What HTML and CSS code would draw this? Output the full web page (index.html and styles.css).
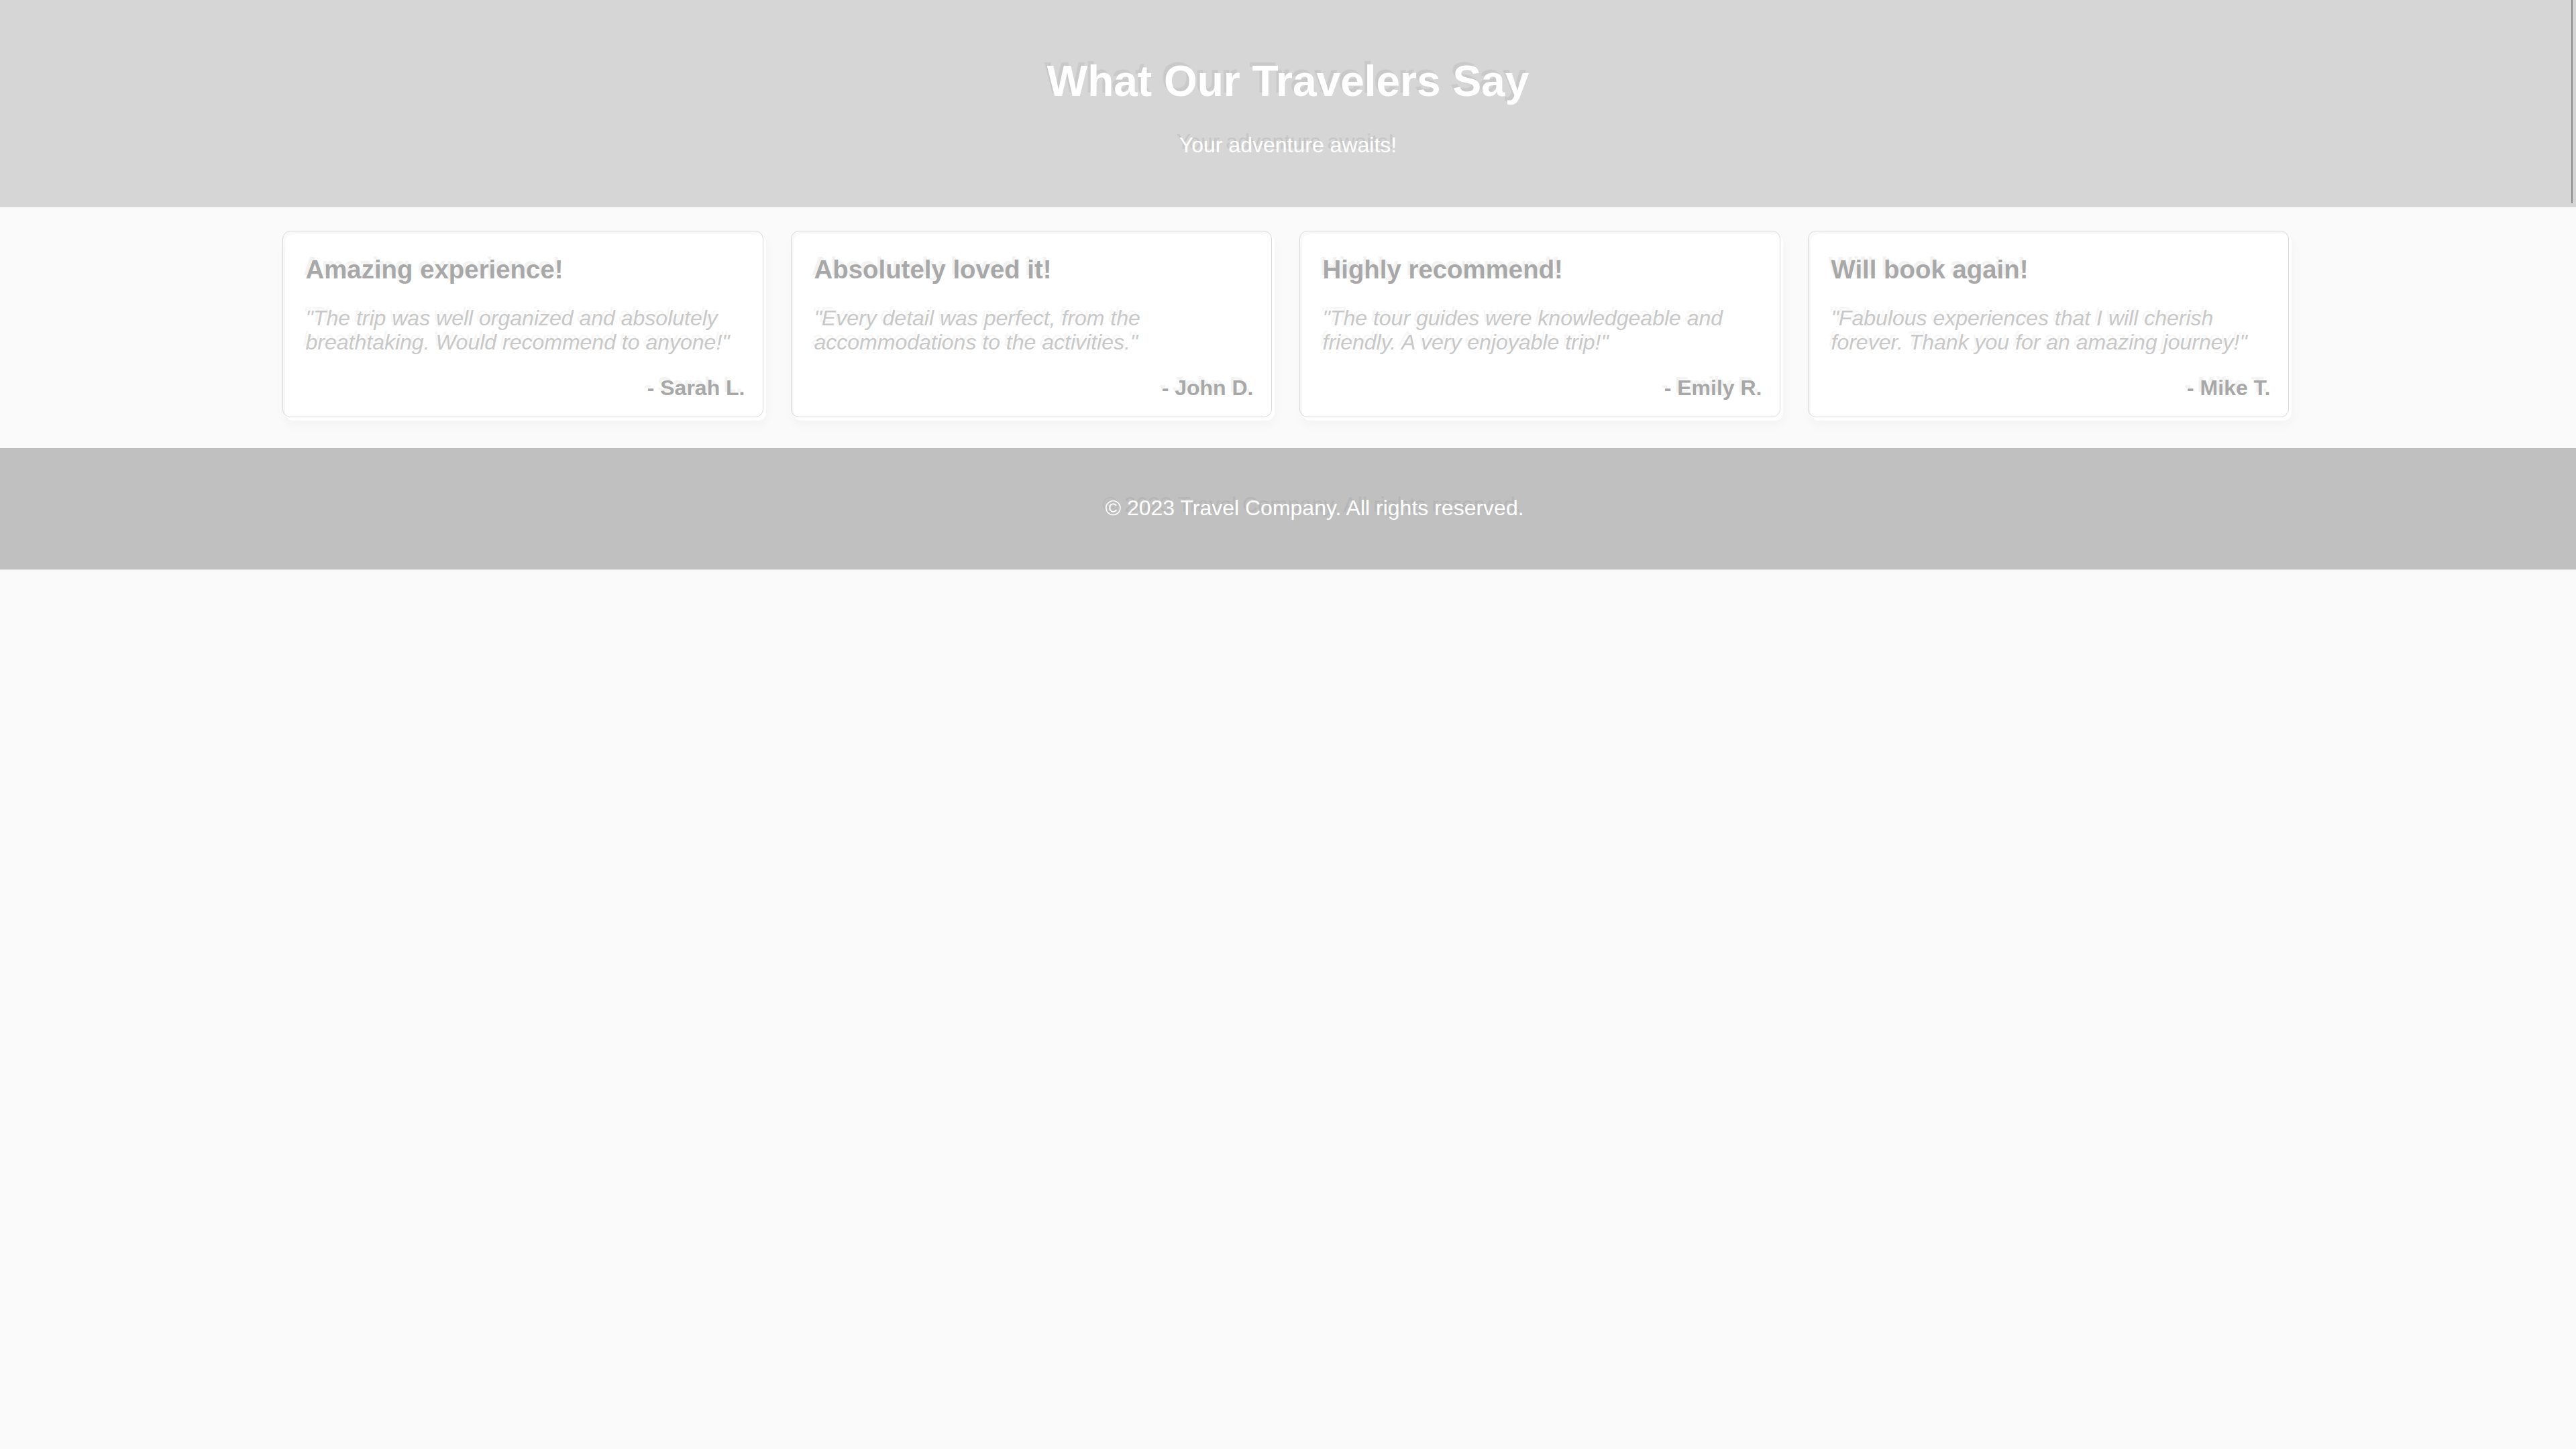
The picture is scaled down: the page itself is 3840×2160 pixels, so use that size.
FILE: index.html
```html
<!DOCTYPE html>
<html lang="en">
<head>
<meta charset="utf-8">
<title>What Our Travelers Say</title>
<link rel="stylesheet" href="styles.css">
</head>
<body>
<header class="hero">
  <h1 class="hero-title">What Our Travelers Say</h1>
  <p class="hero-sub">Your adventure awaits!</p>
</header>
<main class="testimonials">
  <article class="card">
    <h3 class="card-title">Amazing experience!</h3>
    <p class="card-quote">"The trip was well organized and absolutely breathtaking. Would recommend to anyone!"</p>
    <p class="card-author">- Sarah L.</p>
  </article>
  <article class="card">
    <h3 class="card-title">Absolutely loved it!</h3>
    <p class="card-quote">"Every detail was perfect, from the accommodations to the activities."</p>
    <p class="card-author">- John D.</p>
  </article>
  <article class="card">
    <h3 class="card-title">Highly recommend!</h3>
    <p class="card-quote">"The tour guides were knowledgeable and friendly. A very enjoyable trip!"</p>
    <p class="card-author">- Emily R.</p>
  </article>
  <article class="card">
    <h3 class="card-title">Will book again!</h3>
    <p class="card-quote">"Fabulous experiences that I will cherish forever. Thank you for an amazing journey!"</p>
    <p class="card-author">- Mike T.</p>
  </article>
</main>
<footer class="site-footer">
  <p class="footer-text">© 2023 Travel Company. All rights reserved.</p>
</footer>
</body>
</html>
```
FILE: styles.css
```css
html, body {
  margin: 0;
  padding: 0;
}
body {
  background: #fafafa;
  font-family: "Liberation Sans", Arial, sans-serif;
  font-size: 32px;
  line-height: 1.6;
  color: #a8a8a8;
}
.hero {
  position: relative;
  background: #d6d6d6;
  color: #ffffff;
  text-align: center;
  padding: 70px 0 66px;
}
.hero::after {
  content: "";
  position: absolute;
  top: 0;
  right: 5px;
  bottom: 6px;
  border-right: 2px solid #8a8a8a;
}
.hero-title {
  margin: 0 0 19px;
  font-size: 64px;
  font-weight: bold;
  line-height: 102.4px;
  text-shadow: -4px -5px 1px rgba(0, 0, 0, 0.06);
}
.hero-sub {
  margin: 0;
  font-size: 32px;
  line-height: 51.2px;
  text-shadow: -4px -5px 1px rgba(0, 0, 0, 0.08);
}
.testimonials {
  display: grid;
  grid-template-columns: repeat(4, 717px);
  gap: 41px;
  justify-content: center;
  padding: 40px 0 41px;
}
.card {
  position: relative;
  background: #ffffff;
  border-radius: 12px;
  padding: 31px 31px 31px;
  box-shadow: 0 6px 18px rgba(0, 0, 0, 0.035);
}
.card::before {
  content: "";
  position: absolute;
  top: -5px;
  left: -4px;
  right: 4px;
  bottom: 5px;
  border: 1px solid #d9d9d9;
  border-radius: 12px;
  pointer-events: none;
}
.card-title {
  margin: 0 0 32px;
  font-size: 38.4px;
  font-weight: bold;
  line-height: 44px;
  color: #a8a8a8;
  text-shadow: -4px -5px 1px rgba(0, 0, 0, 0.05);
}
.card-quote {
  margin: 0 0 32px;
  font-size: 32px;
  font-style: italic;
  line-height: 36px;
  color: #c8c8c8;
  text-shadow: -4px -5px 1px rgba(0, 0, 0, 0.04);
}
.card-author {
  margin: 0;
  font-size: 32px;
  font-weight: bold;
  line-height: 36px;
  text-align: right;
  color: #a8a8a8;
  text-shadow: -4px -5px 1px rgba(0, 0, 0, 0.05);
}
.site-footer {
  background: #c0c0c0;
  color: #ffffff;
  text-align: center;
  padding: 64px 0 66px 79px;
}
.footer-text {
  margin: 0;
  font-size: 32px;
  line-height: 51.2px;
  text-shadow: -4px -5px 1px rgba(0, 0, 0, 0.06);
}
```
